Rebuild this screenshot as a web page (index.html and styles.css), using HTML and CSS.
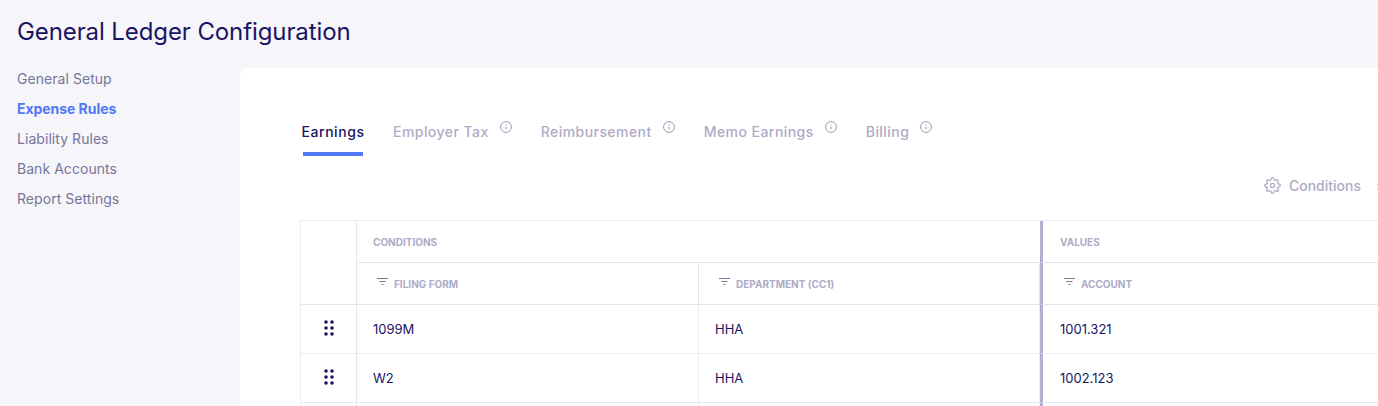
FILE: index.html
```html
<!DOCTYPE html>
<html lang="en">
<head>
    <meta charset="UTF-8">
    <title>General Ledger Configuration</title>
    <link rel="stylesheet" href="styles.css">
</head>
<body>
    <h1 class="page-title">General Ledger Configuration</h1>
    <div class="layout">
        <nav class="side-nav">
            <a href="#">General Setup</a>
            <a href="#" class="active">Expense Rules</a>
            <a href="#">Liability Rules</a>
            <a href="#">Bank Accounts</a>
            <a href="#">Report Settings</a>
        </nav>
        <main class="card">
            <div class="tabs">
                <div class="tab active">Earnings</div>
                <div class="tab">Employer Tax
                    <svg class="info" viewBox="0 0 12 12"><circle cx="6" cy="6" r="5.4"/><path d="M6 5.4v3M6 3.3v1"/></svg>
                </div>
                <div class="tab">Reimbursement
                    <svg class="info" viewBox="0 0 12 12"><circle cx="6" cy="6" r="5.4"/><path d="M6 5.4v3M6 3.3v1"/></svg>
                </div>
                <div class="tab">Memo Earnings
                    <svg class="info" viewBox="0 0 12 12"><circle cx="6" cy="6" r="5.4"/><path d="M6 5.4v3M6 3.3v1"/></svg>
                </div>
                <div class="tab">Billing
                    <svg class="info" viewBox="0 0 12 12"><circle cx="6" cy="6" r="5.4"/><path d="M6 5.4v3M6 3.3v1"/></svg>
                </div>
            </div>
            <div class="toolbar">
                <button class="tool">
                    <svg viewBox="0 0 24 24"><circle cx="12" cy="12" r="3"/><path d="M19.4 15a1.65 1.65 0 0 0 .33 1.82l.06.06a2 2 0 1 1-2.83 2.83l-.06-.06a1.65 1.65 0 0 0-2.8 1.17V21a2 2 0 0 1-4 0v-.09a1.65 1.65 0 0 0-2.8-1.17l-.06.06a2 2 0 1 1-2.83-2.83l.06-.06a1.65 1.65 0 0 0-1.17-2.8H3a2 2 0 0 1 0-4h.09a1.65 1.65 0 0 0 1.17-2.8l-.06-.06a2 2 0 1 1 2.83-2.83l.06.06a1.65 1.65 0 0 0 2.8-1.17V3a2 2 0 0 1 4 0v.09a1.65 1.65 0 0 0 2.8 1.17l.06-.06a2 2 0 1 1 2.83 2.83l-.06.06a1.65 1.65 0 0 0 1.17 2.8H21a2 2 0 0 1 0 4h-.09a1.65 1.65 0 0 0-1.51 1z"/></svg>
                    Conditions
                </button>
                <svg class="tool-next" viewBox="0 0 14 14"><path d="M1 1h12M1 5h12"/></svg>
            </div>
            <div class="grid">
                <div class="cell handle-head"></div>
                <div class="cell group conditions">CONDITIONS</div>
                <div class="cell group values">VALUES</div>

                <div class="cell head">
                    <svg class="filter" viewBox="0 0 11 8"><path d="M0 .5h11M2.5 3.5h6M4.5 6.5h2"/></svg>
                    FILING FORM
                </div>
                <div class="cell head">
                    <svg class="filter" viewBox="0 0 11 8"><path d="M0 .5h11M2.5 3.5h6M4.5 6.5h2"/></svg>
                    DEPARTMENT (CC1)
                </div>
                <div class="cell head values">
                    <svg class="filter" viewBox="0 0 11 8"><path d="M0 .5h11M2.5 3.5h6M4.5 6.5h2"/></svg>
                    ACCOUNT
                </div>

                <div class="cell handle">
                    <svg viewBox="0 0 10 16"><circle cx="2" cy="2" r="1.8"/><circle cx="8" cy="2" r="1.8"/><circle cx="2" cy="8" r="1.8"/><circle cx="8" cy="8" r="1.8"/><circle cx="2" cy="14" r="1.8"/><circle cx="8" cy="14" r="1.8"/></svg>
                </div>
                <div class="cell row">1099M</div>
                <div class="cell row">HHA</div>
                <div class="cell row values">1001.321</div>

                <div class="cell handle">
                    <svg viewBox="0 0 10 16"><circle cx="2" cy="2" r="1.8"/><circle cx="8" cy="2" r="1.8"/><circle cx="2" cy="8" r="1.8"/><circle cx="8" cy="8" r="1.8"/><circle cx="2" cy="14" r="1.8"/><circle cx="8" cy="14" r="1.8"/></svg>
                </div>
                <div class="cell row">W2</div>
                <div class="cell row">HHA</div>
                <div class="cell row values">1002.123</div>

                <div class="cell handle"></div>
                <div class="cell row"></div>
                <div class="cell row"></div>
                <div class="cell row values"></div>
            </div>
        </main>
    </div>
</body>
</html>
```

FILE: styles.css
```css
* {
    margin: 0;
    box-sizing: border-box;
}
html, body {
    height: 100%;
    overflow: hidden;
}
body {
    font-family: Inter, "Noto Sans", sans-serif;
    background: #f5f5fa;
    color: #1a1463;
}
.page-title {
    font-size: 24px;
    font-weight: 400;
    letter-spacing: -0.1px;
    line-height: 32px;
    padding: 16px 0 0 17px;
}
.layout {
    display: flex;
    margin-top: 20px;
}
.side-nav {
    width: 240px;
    height: 338px;
    overflow: hidden;
    flex-shrink: 0;
    display: flex;
    flex-direction: column;
    padding: 1px 0 0 17px;
}
.side-nav a {
    font-size: 14px;
    letter-spacing: 0.05px;
    line-height: 20px;
    margin-bottom: 10px;
    color: #77759a;
    text-decoration: none;
}
.side-nav a.active {
    color: #5278f5;
    font-weight: 700;
    letter-spacing: -0.05px;
}
.card {
    width: 1200px;
    height: 338px;
    overflow: hidden;
    flex-shrink: 0;
    background: #fff;
    border-radius: 8px 0 0 0;
    padding: 0 0 0 60px;
}
.tabs {
    display: flex;
    padding-top: 54px;
}
.tab {
    display: flex;
    align-items: flex-start;
    font-size: 14px;
    font-weight: 500;
    letter-spacing: 0.45px;
    line-height: 20px;
    color: #aeabc6;
    margin-right: 29px;
    height: 34px;
    white-space: nowrap;
}
.tab.active {
    color: #1a1463;
    letter-spacing: 0.55px;
    border-bottom: 4px solid #5278f5;
    margin: 0 30px 0 3px;
    width: 60px;
    text-indent: -1.5px;
}
.info {
    width: 12px;
    height: 12px;
    margin: -1px 0 0 11px;
    fill: none;
    stroke: #9a98b5;
    stroke-width: 1;
}
.toolbar {
    display: flex;
    justify-content: flex-end;
    align-items: flex-start;
    height: 64px;
    padding-top: 19px;
    width: 1090px;
}
.tool {
    display: flex;
    align-items: center;
    height: 20px;
    gap: 8px;
    border: none;
    background: none;
    padding: 0;
    font: 500 14px Inter, sans-serif;
    color: #aeabc6;
}
.tool svg {
    width: 17px;
    height: 17px;
    fill: none;
    stroke: #aeabc6;
    stroke-width: 1.8;
}
.tool-next {
    width: 14px;
    height: 14px;
    margin: 9px 0 0 15px;
    fill: none;
    stroke: #aeabc6;
}
.grid {
    display: grid;
    grid-template-columns: 56px 342px 341px 400px;
    grid-template-rows: 42px 42px 49px 49px 49px;
    width: 1140px;
    border-top: 1px solid #ebebf5;
    border-left: 1px solid #ebebf5;
}
.cell {
    display: flex;
    align-items: center;
    border-right: 1px solid #e4e4ec;
    border-bottom: 1px solid #e4e4ec;
    padding-left: 16px;
}
.handle-head {
    grid-row: span 2;
}
.group {
    font-size: 10px;
    font-weight: 700;
    color: #aeabc6;
    border-right: none;
}
.group.conditions {
    grid-column: span 2;
}
.head {
    font-size: 10px;
    font-weight: 700;
    color: #aeabc6;
}
.filter {
    width: 11px;
    height: 8px;
    margin: -4px 6px 0 4px;
    fill: none;
    stroke: #77759a;
    stroke-width: 1;
}
.handle {
    justify-content: center;
    padding-left: 0;
    border-bottom-color: #ebebf5;
}
.handle svg {
    width: 10px;
    height: 16px;
    margin-top: -2px;
    fill: #1a1463;
}
.row {
    font-size: 13px;
    color: #1a1463;
    border-bottom-color: #ebebf5;
    border-right-color: #ebebf5;
}
.cell.values {
    border-left: 3px solid #b3b0cf;
    border-right: none;
    padding-left: 17px;
}
```
